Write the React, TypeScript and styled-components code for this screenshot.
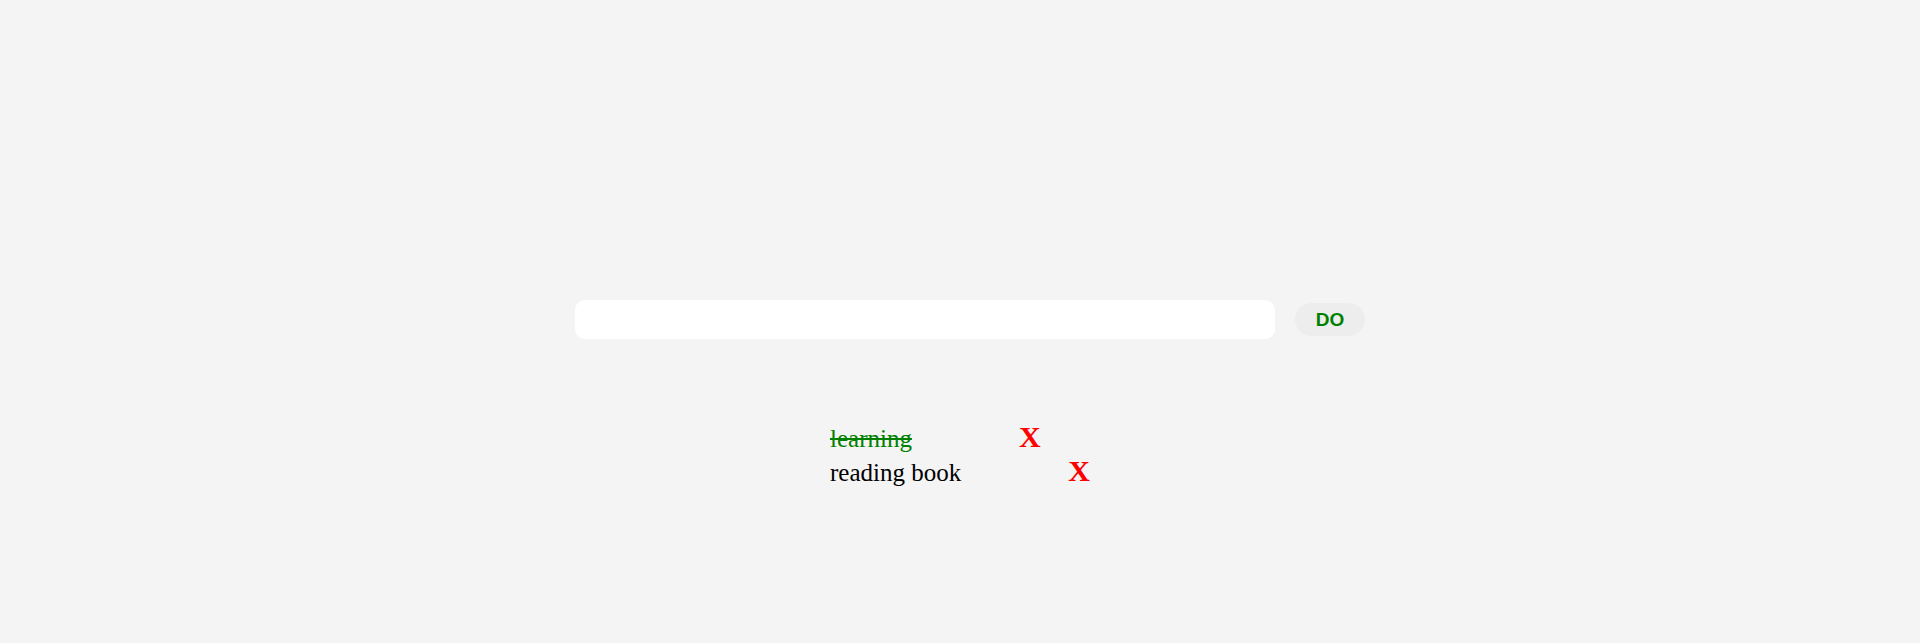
import React, { useState } from "react";
import styled, { createGlobalStyle } from "styled-components";

const GlobalStyle = createGlobalStyle`
  html, body {
    margin: 0;
    padding: 0;
    background: #f4f4f4;
    font-family: "Liberation Serif", "Times New Roman", serif;
  }
`;

const Page = styled.div`
  min-height: 643px;
  box-sizing: border-box;
  padding-top: 300px;
  padding-left: 20px;
  display: flex;
  justify-content: center;
`;

const Column = styled.div`
  width: 790px;
  display: flex;
  flex-direction: column;
`;

const Form = styled.form`
  display: flex;
  align-items: center;
  gap: 20px;
  margin: 0;
`;

const Input = styled.input`
  width: 700px;
  height: 39px;
  box-sizing: border-box;
  border: none;
  outline: none;
  border-radius: 10px;
  background: #ffffff;
  padding: 0 12px;
  font-size: 16px;
  font-family: "Liberation Sans", Arial, sans-serif;
`;

const DoButton = styled.button`
  width: 70px;
  height: 33px;
  border: none;
  border-radius: 17px;
  background: #ededed;
  color: #008000;
  font-family: "Liberation Sans", Arial, sans-serif;
  font-weight: bold;
  font-size: 19px;
  padding: 0;
  cursor: pointer;
`;

const List = styled.ul`
  list-style: none;
  margin: 81px 0 0 0;
  padding: 0 0 0 255px;
`;

const Item = styled.li`
  display: flex;
  align-items: baseline;
`;

const Label = styled.span<{ $done: boolean }>`
  font-size: 25px;
  color: ${(p) => (p.$done ? "#008000" : "#000000")};
  text-decoration: ${(p) => (p.$done ? "line-through" : "none")};
  cursor: pointer;
`;

const Remove = styled.span`
  margin-left: 107px;
  font-size: 30px;
  font-weight: bold;
  color: #ff0000;
  cursor: pointer;
`;

type Todo = { text: string; done: boolean };

export default function App() {
  const [value, setValue] = useState("");
  const [todos, setTodos] = useState<Todo[]>([
    { text: "learning", done: true },
    { text: "reading book", done: false },
  ]);

  return (
    <>
      <GlobalStyle />
      <Page>
        <Column>
          <Form
            onSubmit={(e) => {
              e.preventDefault();
              if (!value.trim()) return;
              setTodos([...todos, { text: value, done: false }]);
              setValue("");
            }}
          >
            <Input value={value} onChange={(e) => setValue(e.target.value)} />
            <DoButton type="submit">DO</DoButton>
          </Form>
          <List>
            {todos.map((t, i) => (
              <Item key={i}>
                <Label
                  $done={t.done}
                  onClick={() =>
                    setTodos(todos.map((x, j) => (j === i ? { ...x, done: !x.done } : x)))
                  }
                >
                  {t.text}
                </Label>
                <Remove onClick={() => setTodos(todos.filter((_, j) => j !== i))}>X</Remove>
              </Item>
            ))}
          </List>
        </Column>
      </Page>
    </>
  );
}
